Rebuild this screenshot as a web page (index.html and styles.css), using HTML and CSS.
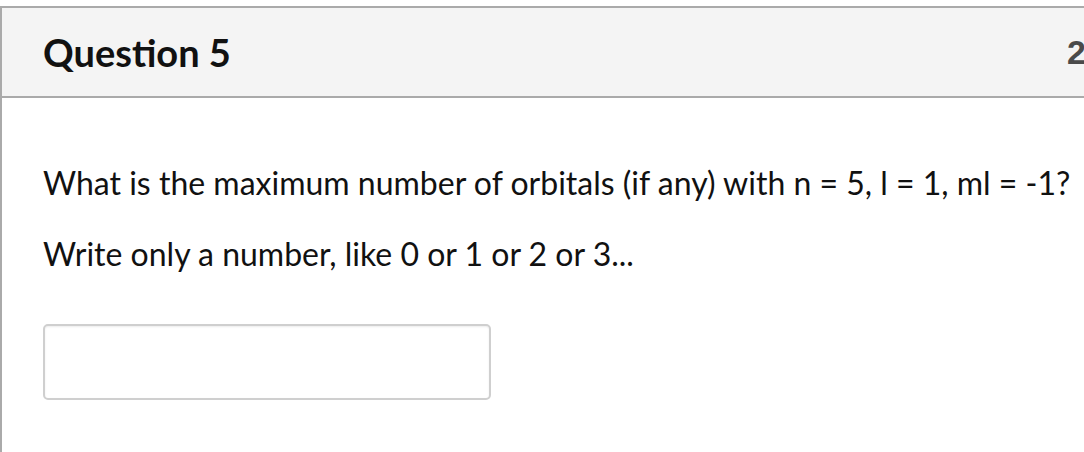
FILE: index.html
```html
<!DOCTYPE html>
<html>
<head>
<meta charset="utf-8">
<link rel="stylesheet" href="styles.css">
</head>
<body>
<div class="question">
  <div class="q-header">
    <h2 class="q-title">Question 5</h2>
    <span class="q-points">2 pts</span>
  </div>
  <div class="q-body">
    <p class="q-text">What is the maximum number of orbitals (if any) with n = 5, l = 1, ml = -1?</p>
    <p class="q-text">Write only a number, like 0 or 1 or 2 or 3...</p>
    <input class="q-answer" type="text">
  </div>
</div>
</body>
</html>
```
FILE: styles.css
```css
html, body {
  margin: 0;
  padding: 0;
  background: #fff;
  overflow: hidden;
}
body {
  font-family: Lato, "Liberation Sans", sans-serif;
  color: #111;
}
.question {
  margin-top: 6px;
  width: 1160px;
  border-top: 2px solid #aaa;
  border-left: 2px solid #aaa;
  height: 460px;
}
.q-header {
  display: flex;
  align-items: center;
  height: 88px;
  background: #f4f4f4;
  border-bottom: 2px solid #aaa;
  padding: 0 0 0 41px;
}
.q-title {
  margin: 0;
  font-size: 38px;
  font-weight: 700;
  color: #111;
  flex: 0 0 auto;
  width: 1024px;
}
.q-points {
  font-family: "Liberation Sans", Arial, sans-serif;
  font-size: 34px;
  font-weight: 700;
  color: #4a4a4a;
  white-space: nowrap;
}
.q-body {
  padding: 65px 0 0 41px;
}
.q-text {
  margin: 0 0 31px 0;
  font-size: 32px;
  line-height: 40px;
}
.q-answer {
  display: block;
  margin-top: 50px;
  width: 448px;
  height: 76px;
  box-sizing: border-box;
  border: 2px solid #cfcfcf;
  border-radius: 5px;
  box-shadow: inset 0 1px 2px rgba(0,0,0,0.08);
  background: #fff;
}
```
